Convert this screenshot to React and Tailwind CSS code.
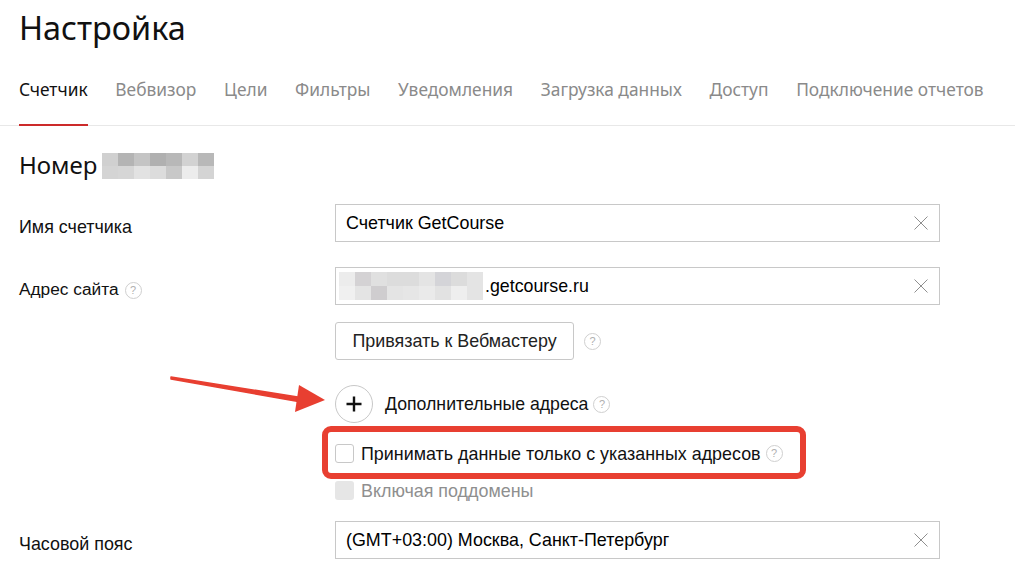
import React from 'react';

const tabs = ['Вебвизор', 'Цели', 'Фильтры', 'Уведомления', 'Загрузка данных', 'Доступ', 'Подключение отчетов'];

const numberBlur = [
  ['#d0d0d0', '#b4b4b4', '#c4c4c4', '#b0b0b0', '#b8b8b8', '#d2d2d2', '#b8b8b8'],
  ['#d4d4d4', '#d6d6d6', '#e2e2e2', '#dcdcdc', '#c8c8c8', '#ececec', '#d4d4d4'],
];

const addressBlur = [
  ['#ececec', '#d4d2d4', '#e0e0e0', '#dcdcdc', '#dcdcdc', '#e4e4e4', '#d4d4d8', '#dcdcdc', '#e4e4e4'],
  ['#f0f0f0', '#e4e4e4', '#cfcdcf', '#e4e4e4', '#e6e6e6', '#eaeaea', '#e2e2e2', '#eeeeee', '#e4e4e4'],
];

const Blur = ({ rows, cellClass }) => (
  <div className="flex flex-col shrink-0">
    {rows.map((row, i) => (
      <div key={i} className="flex">
        {row.map((color, j) => (
          <div key={j} className={cellClass} style={{ backgroundColor: color }} />
        ))}
      </div>
    ))}
  </div>
);

const Help = ({ className = '' }) => (
  <span className={`inline-flex items-center justify-center shrink-0 w-[17px] h-[17px] rounded-full border border-[#cfcfcf] text-[11px] leading-none text-[#b0b0b0] ${className}`}>
    ?
  </span>
);

const Clear = () => (
  <svg width="16" height="16" viewBox="0 0 16 16" className="shrink-0" fill="none" stroke="#8f8f8f" strokeWidth="1">
    <path d="M1.5 1.5l13 13M14.5 1.5l-13 13" />
  </svg>
);

const Input = ({ children, className = '' }) => (
  <div className={`flex items-center justify-between w-[605px] h-[38px] border border-[#c8c8c8] pr-[10px] text-black ${className}`}>
    {children}
    <Clear />
  </div>
);

const Row = ({ label, help, children, className = '' }) => (
  <div className={`flex ${className}`}>
    <div className="flex items-center w-[316px] h-[38px] pt-[8px] shrink-0 text-[#111]">
      <span className={help ? 'text-[17.3px]' : ''}>{label}</span>
      {help && <Help className="ml-[6px]" />}
    </div>
    {children}
  </div>
);

export default function App() {
  return (
    <div className="relative w-[1015px] h-[588px] overflow-hidden bg-white font-['Liberation_Sans',sans-serif] text-[17.9px]">
      <h1 className="pl-[19px] pt-[7px] h-[62px] text-[32.4px] leading-[40px] text-[#111] font-['Noto_Sans',sans-serif]">Настройка</h1>

      <div className="flex gap-[27.7px] h-[64px] pl-[19px] border-b border-[#e8e8e8] font-['Noto_Sans',sans-serif] text-[17.35px]">
        <div className="h-[64px] pt-[14px] border-b-2 border-[#cc2a2a] text-[#111]">Счетчик</div>
        {tabs.map((tab) => (
          <div key={tab} className="pt-[14px] text-[#8a8a8a] whitespace-nowrap">{tab}</div>
        ))}
      </div>

      <div className="pl-[19px]">
        <div className="flex items-center gap-[5px] mt-[27px] h-[26px]">
          <span className="text-[24px] text-[#111] -translate-y-px font-['Noto_Sans',sans-serif]">Номер</span>
          <Blur rows={numberBlur} cellClass="w-[16px] h-[13px]" />
        </div>

        <Row label="Имя счетчика" className="mt-[25px]">
          <Input className="pl-[10px]">Счетчик GetCourse</Input>
        </Row>

        <Row label="Адрес сайта" help className="mt-[25px]">
          <Input className="pl-[3px]">
            <div className="flex items-center">
              <Blur rows={addressBlur} cellClass="w-[16px] h-[14px]" />
              <span className="ml-[2px] text-[17.8px]">.getcourse.ru</span>
            </div>
          </Input>
        </Row>

        <div className="ml-[316px]">
          <div className="flex items-center gap-[10px] mt-[17px]">
            <div className="flex items-center justify-center w-[239px] h-[38px] rounded-[3px] border border-[#c8c8c8] text-[#222]">
              Привязать к Вебмастеру
            </div>
            <Help />
          </div>

          <div className="flex items-center mt-[25px]">
            <div className="flex items-center justify-center w-[38px] h-[38px] rounded-full border border-[#c8c8c8]">
              <svg width="18" height="18" viewBox="0 0 18 18" stroke="#111" strokeWidth="2.4">
                <path d="M9 1.5v15M1.5 9h15" />
              </svg>
            </div>
            <span className="ml-[12px] text-[17.7px] text-[#111]">Дополнительные адреса</span>
            <Help className="ml-[5px]" />
          </div>

          <div className="flex items-center mt-[21px] h-[19px]">
            <div className="w-[19px] h-[19px] rounded-[3px] border border-[#c8c8c8]" />
            <span className="ml-[7px] translate-y-px text-[#111]">Принимать данные только с указанных адресов</span>
            <Help className="ml-[5px]" />
          </div>

          <div className="flex items-center mt-[18px] h-[19px]">
            <div className="w-[19px] h-[19px] rounded-[3px] bg-[#e6e6e6]" />
            <span className="ml-[7px] translate-y-px text-[#8f8f8f]">Включая поддомены</span>
          </div>
        </div>

        <Row label="Часовой пояс" className="mt-[21px]">
          <Input className="pl-[10px]">(GMT+03:00) Москва, Санкт-Петербург</Input>
        </Row>
      </div>

      {/* annotation drawn over the screenshot */}
      <div className="absolute left-[322px] top-[426px] w-[484px] h-[53px] rounded-[9px] border-[6px] border-[#e83f31]" />
      <svg className="absolute left-0 top-0 pointer-events-none" width="1015" height="588" fill="none">
        <path d="M171 377L171 379L304 402.5L304 398Z" fill="#e83f31" stroke="#e83f31" strokeWidth="1.5" strokeLinejoin="round" />
        <path d="M325 400L299 385L295 412Z" fill="#e83f31" />
      </svg>
    </div>
  );
}
